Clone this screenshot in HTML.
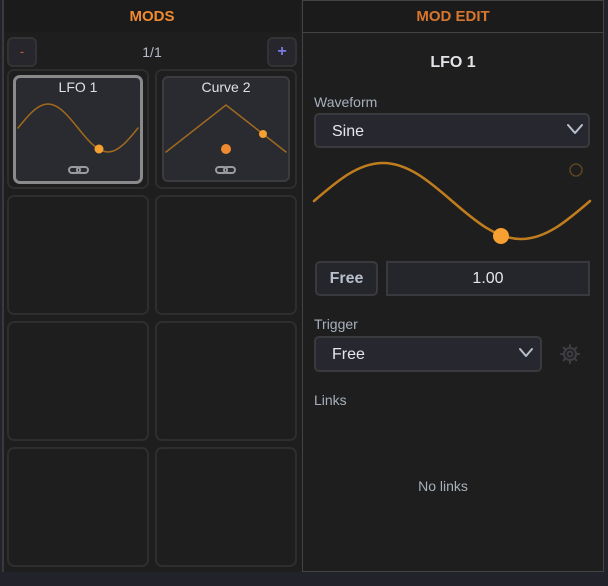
<!DOCTYPE html>
<html><head><meta charset="utf-8"><style>
*{box-sizing:border-box;margin:0;padding:0}
body{width:608px;height:586px;background:#22222a;font-family:"Liberation Sans",sans-serif;position:relative;overflow:hidden}
.a{position:absolute}
.t{position:absolute;text-align:center;white-space:nowrap}
.cell{position:absolute;width:142px;height:120px;border:2px solid #2e2e2e;border-radius:7px;background:#1e1e1e}
.sel{position:absolute;background:#272730;border:2px solid #3a3a3e;border-radius:5px;color:#e6e6ea;font-size:16px;padding-left:16px;line-height:33px}
</style></head><body>
<div class="a" style="left:2px;top:0;width:300px;height:572px;background:#1e1e1e;border-left:2px solid #3a3a3a"></div>
<div class="a" style="left:4px;top:0;width:296px;height:32px;background:#1b1b1b"></div>
<div class="t" style="left:4px;width:296px;top:8px;font-size:15px;font-weight:bold;color:#f08a30">MODS</div>
<div class="a" style="left:7px;top:37px;width:30px;height:30px;background:#26262c;border:2px solid #333;border-radius:6px;color:#b55a3a;text-align:center;line-height:25px;font-size:14px">-</div>
<div class="a" style="left:267px;top:37px;width:30px;height:30px;background:#26262c;border:2px solid #333;border-radius:6px;color:#7a7ae0;text-align:center;line-height:26px;font-size:16px;font-weight:bold">+</div>
<div class="t" style="left:7px;width:290px;top:44px;font-size:14px;color:#b8bcc6">1/1</div>
<div class="cell" style="left:7px;top:69px"></div><div class="cell" style="left:155px;top:69px"></div>
<div class="cell" style="left:7px;top:195px"></div><div class="cell" style="left:155px;top:195px"></div>
<div class="cell" style="left:7px;top:321px"></div><div class="cell" style="left:155px;top:321px"></div>
<div class="cell" style="left:7px;top:447px"></div><div class="cell" style="left:155px;top:447px"></div>
<div class="a" style="left:13px;top:75px;width:130px;height:109px;background:#2a2a31;border:3px solid #8a8a8a;border-radius:7px"></div>
<div class="a" style="left:162px;top:76px;width:128px;height:106px;background:#2a2a31;border:2px solid #3c3c40;border-radius:6px"></div>
<div class="t" style="left:13px;width:130px;top:79px;font-size:14px;color:#e0e0e4">LFO 1</div>
<div class="t" style="left:162px;width:128px;top:79px;font-size:14px;color:#e0e0e4">Curve 2</div>
<div class="a" style="left:302px;top:0;width:302px;height:572px;background:#1e1e1e;border:1px solid #444"></div>
<div class="a" style="left:303px;top:1px;width:300px;height:32px;background:#1b1b1b;border-bottom:1px solid #444"></div>
<div class="t" style="left:303px;width:300px;top:8px;font-size:15px;font-weight:bold;color:#d8762e">MOD EDIT</div>
<div class="t" style="left:303px;width:300px;top:54px;font-size:16px;font-weight:bold;color:#e4e4e8">LFO 1</div>
<div class="a" style="left:314px;top:94px;font-size:14px;color:#a8b0be">Waveform</div>
<div class="sel" style="left:314px;top:113px;width:276px;height:35px">Sine</div>
<div class="a" style="left:315px;top:261px;width:63px;height:35px;background:#25252c;border:2px solid #3a3a3e;border-radius:5px;color:#b8c0cc;font-weight:bold;font-size:16px;text-align:center;line-height:31px">Free</div>
<div class="a" style="left:386px;top:261px;width:204px;height:35px;background:#25252c;border:2px solid #3a3a3e;color:#e6e6ea;font-size:16px;text-align:center;line-height:31px">1.00</div>
<div class="a" style="left:314px;top:316px;font-size:14px;color:#a8b0be">Trigger</div>
<div class="sel" style="left:314px;top:336px;width:228px;height:36px;line-height:34px">Free</div>
<div class="a" style="left:314px;top:392px;font-size:14px;color:#a8b0be">Links</div>
<div class="t" style="left:303px;width:280px;top:478px;font-size:14px;color:#a8b0be">No links</div>
<svg class="a" style="left:0;top:0" width="608" height="586">
<g fill="none" stroke-linecap="round" stroke-linejoin="round">
<path d="M568 125 L575 133 L582 125" stroke="#b8c0cc" stroke-width="2"/>
<path d="M520 349 L526 356 L532 349" stroke="#b8c0cc" stroke-width="2"/>
<path d="M314 201 C336.5 181.5 358 163 383 163 C408 163 429.5 181.5 452 201 C474.5 220.5 496 239 521 239 C546 239 567.5 220.5 590 201" stroke="#c07d1e" stroke-width="2.5"/>
<circle cx="576" cy="170" r="6" stroke="#5a4520" stroke-width="1.5"/>
<path d="M18 128 C27.8 115.7 37.5 104 48 104 C58.5 104 68.2 115.7 78 128 C87.8 140.3 97.5 152 108 152 C118.5 152 128.2 140.3 138 128" stroke="#a06a1e" stroke-width="1.5"/>
<path d="M166 152 L226 105 L286 152" stroke="#a06a1e" stroke-width="1.5"/>
<g stroke="#9a9aa0" stroke-width="2"><rect x="69" y="167" width="11" height="6" rx="3"/><rect x="77" y="167" width="11" height="6" rx="3"/>
<rect x="216" y="167" width="11" height="6" rx="3"/><rect x="224" y="167" width="11" height="6" rx="3"/></g>
<g stroke="#3e3e44" stroke-width="2"><circle cx="570" cy="354" r="6"/><circle cx="570" cy="354" r="2.5"/>
<path d="M570 345v3M570 360v3M561 354h3M576 354h3M563.6 347.6l2 2M574.4 358.4l2 2M563.6 360.4l2-2M574.4 349.6l2-2"/></g>
</g>
<circle cx="501" cy="236" r="8" fill="#f5a030"/>
<circle cx="99" cy="149" r="4.5" fill="#f5a030"/>
<circle cx="263" cy="134" r="4" fill="#f5a030"/>
<circle cx="226" cy="149" r="5" fill="#f08a30"/>
</svg>
</body></html>
